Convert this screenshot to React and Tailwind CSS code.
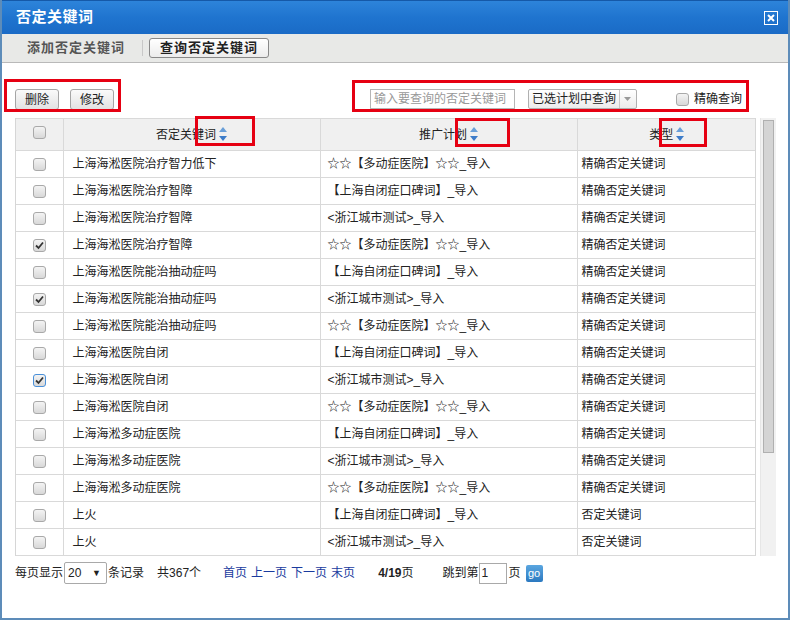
import React from 'react';

const A = '☆☆【多动症医院】☆☆_导入';
const B = '【上海自闭症口碑词】_导入';
const C = '<浙江城市测试>_导入';
const EX = '精确否定关键词';
const NEG = '否定关键词';

const rows = [
  ['上海海淞医院治疗智力低下', A, EX, false],
  ['上海海淞医院治疗智障', B, EX, false],
  ['上海海淞医院治疗智障', C, EX, false],
  ['上海海淞医院治疗智障', A, EX, true],
  ['上海海淞医院能治抽动症吗', B, EX, false],
  ['上海海淞医院能治抽动症吗', C, EX, true],
  ['上海海淞医院能治抽动症吗', A, EX, false],
  ['上海海淞医院自闭', B, EX, false],
  ['上海海淞医院自闭', C, EX, true, true],
  ['上海海淞医院自闭', A, EX, false],
  ['上海海淞多动症医院', B, EX, false],
  ['上海海淞多动症医院', C, EX, false],
  ['上海海淞多动症医院', A, EX, false],
  ['上火', B, NEG, false],
  ['上火', C, NEG, false],
  ['上火', A, NEG, false],
];

const Check = ({ checked, focus }) => (
  <span
    className={`inline-flex items-center justify-center w-[13px] h-[13px] rounded-[3px] border ${
      focus ? 'border-[#4a90d9]' : 'border-[#a9a9a9]'
    } bg-gradient-to-b from-[#f4f4f4] to-[#d8d8d8]`}
  >
    {checked && (
      <svg width="9" height="9" viewBox="0 0 9 9">
        <path d="M1 4.5 L3.5 7 L8 1.5" stroke="#333" strokeWidth="1.8" fill="none" />
      </svg>
    )}
  </span>
);

const Sort = () => (
  <svg width="8" height="14" viewBox="0 0 8 14" className="inline-block ml-[3px] align-[-2px]">
    <path d="M4 0 L8 5 L0 5 Z" fill="#6a9fd8" />
    <path d="M4 14 L8 9 L0 9 Z" fill="#3d7cc9" />
  </svg>
);

const RedBox = ({ className }) => (
  <div className={`absolute border-[3px] border-[#e60012] pointer-events-none ${className}`} />
);

export default function App() {
  return (
    <div
      className="relative w-[790px] h-[620px] bg-white border-l-2 border-r-2 border-b-2 border-[#5d8cb9] overflow-hidden text-[12px] text-[#333]"
      style={{ fontFamily: '"Liberation Sans", "Noto Sans CJK SC", sans-serif' }}
    >
      {/* title bar */}
      <div className="h-[34px] flex items-center justify-between pl-[14px] pr-[10px] bg-gradient-to-b from-[#2d84da] via-[#1f74cf] to-[#1a6bc6] border-t border-[#1559a8]">
        <span className="text-white text-[15px] font-bold tracking-[0.5px]">否定关键词</span>
        <span className="w-[14px] h-[14px] border border-white flex items-center justify-center">
          <svg width="8" height="8" viewBox="0 0 8 8">
            <path d="M1 1 L7 7 M7 1 L1 7" stroke="white" strokeWidth="2" />
          </svg>
        </span>
      </div>

      {/* tabs */}
      <div className="h-[29px] flex items-center bg-[#e8e9e7] border-b border-[#b9b9b9] pl-[25px]">
        <span className="text-[13px] font-bold text-[#555] tracking-[1px]">添加否定关键词</span>
        <span className="w-px h-[16px] bg-[#c8c8c8] ml-[17px] mr-[6px]" />
        <span className="h-[20px] px-[10px] flex items-center border border-[#888] rounded-[3px] bg-gradient-to-b from-white to-[#ececec] text-[13px] font-bold text-[#222] tracking-[1px]">
          查询否定关键词
        </span>
      </div>

      {/* toolbar */}
      <div className="relative h-[54px] flex items-end pb-[5px] pl-[13px] pr-[46px]">
        <div className="flex gap-[11px] mb-[2px]">
          {['删除', '修改'].map((t) => (
            <span
              key={t}
              className="h-[21px] w-[44px] flex items-center justify-center border border-[#a5a5a5] rounded-[3px] bg-gradient-to-b from-[#fafafa] to-[#e2e2e2] text-[12px] text-[#222]"
            >
              {t}
            </span>
          ))}
        </div>
        <div className="ml-auto flex items-center mb-[3px]">
          <span className="w-[145px] h-[20px] border border-[#b5b5b5] flex items-center pl-[3px] text-[#999]">
            输入要查询的否定关键词
          </span>
          <span className="ml-[13px] h-[20px] w-[109px] flex items-center border border-[#b0b0b0] rounded-[2px] bg-gradient-to-b from-white to-[#ececec] text-[#222]">
            <span className="pl-[3px] flex-1">已选计划中查询</span>
            <span className="w-[17px] h-full border-l border-[#c8c8c8] flex items-center justify-center">
              <svg width="7" height="4" viewBox="0 0 7 4">
                <path d="M0 0 L7 0 L3.5 4 Z" fill="#999" />
              </svg>
            </span>
          </span>
          <span className="ml-[39px] flex items-center gap-[5px] text-[#222]">
            <Check />
            精确查询
          </span>
        </div>
        <RedBox className="left-[2px] top-[16px] w-[117px] h-[33px]" />
        <RedBox className="left-[350px] top-[17px] w-[397px] h-[32px]" />
      </div>

      {/* table area */}
      <div className="relative flex pl-[13px] h-[439px] pt-[1px]">
        <div className="w-[741px] overflow-hidden border-l border-r border-[#d6d6d6]">
          <table className="border-collapse table-fixed w-[740px]">
            <colgroup>
              <col className="w-[47px]" />
              <col className="w-[257px]" />
              <col className="w-[257px]" />
              <col className="w-[179px]" />
            </colgroup>
            <thead>
              <tr className="h-[32px] bg-[#f0f0f0]">
                <th className="border border-[#d9d9d9] border-l-0 text-center font-normal">
                  <Check />
                </th>
                <th className="border border-[#d9d9d9] text-center font-normal text-[#222]">
                  否定关键词
                  <Sort />
                </th>
                <th className="border border-[#d9d9d9] text-center font-normal text-[#222]">
                  推广计划
                  <Sort />
                </th>
                <th className="border border-[#d9d9d9] border-r-0 text-center font-normal text-[#222]">
                  类型
                  <Sort />
                </th>
              </tr>
            </thead>
            <tbody>
              {rows.map(([k, p, t, c, f], i) => (
                <tr key={i} className="h-[27px]">
                  <td className="border border-[#d9d9d9] border-l-0 text-center">
                    <span className="inline-flex align-middle">
                      <Check checked={c} focus={f} />
                    </span>
                  </td>
                  <td className="border border-[#d9d9d9] pl-[9px] text-[#222] whitespace-nowrap">{k}</td>
                  <td className="border border-[#d9d9d9] pl-[7px] text-[#222] whitespace-nowrap">{p}</td>
                  <td className="border border-[#d9d9d9] border-r-0 pl-[4px] text-[#222] whitespace-nowrap">{t}</td>
                </tr>
              ))}
            </tbody>
          </table>
        </div>
        {/* scrollbar */}
        <div className="ml-[4px] w-[16px] bg-[#f1f1f1] border-l border-[#e6e6e6] pt-[2px] px-[2px]">
          <div className="h-[333px] bg-[#d4d4d4] border border-[#b0b0b0]" />
        </div>
        <RedBox className="left-[193px] top-[-1px] w-[60px] h-[30px]" />
        <RedBox className="left-[453px] top-[1px] w-[55px] h-[29px]" />
        <RedBox className="left-[657px] top-[1px] w-[48px] h-[29px]" />
      </div>

      {/* footer */}
      <div className="flex items-center pl-[13px] h-[34px] text-[#222] leading-[16px]">
        <span>每页显示</span>
        <span className="ml-[1px] h-[22px] w-[43px] border border-[#a9a9a9] rounded-[2px] flex items-center justify-between px-[3px]">
          <span>20</span>
          <span className="text-[9px] mr-[2px]">▼</span>
        </span>
        <span className="ml-[1px]">条记录</span>
        <span className="ml-[13px]">共367个</span>
        <span className="ml-[22px] text-[#1a3b9e] flex gap-[4px]">
          <span>首页</span>
          <span>上一页</span>
          <span>下一页</span>
          <span>末页</span>
        </span>
        <span className="ml-[23px]">
          <b>4/19</b>页
        </span>
        <span className="ml-[29px]">跳到第</span>
        <span className="h-[21px] w-[28px] border border-[#a9a9a9] flex items-center pl-[2px]">1</span>
        <span className="ml-[2px]">页</span>
        <span className="ml-[5px] h-[17px] w-[17px] rounded-[2px] bg-gradient-to-b from-[#5aa6e0] to-[#2b79c0] text-white text-[11px] leading-none flex items-center justify-center">
          go
        </span>
      </div>
    </div>
  );
}
